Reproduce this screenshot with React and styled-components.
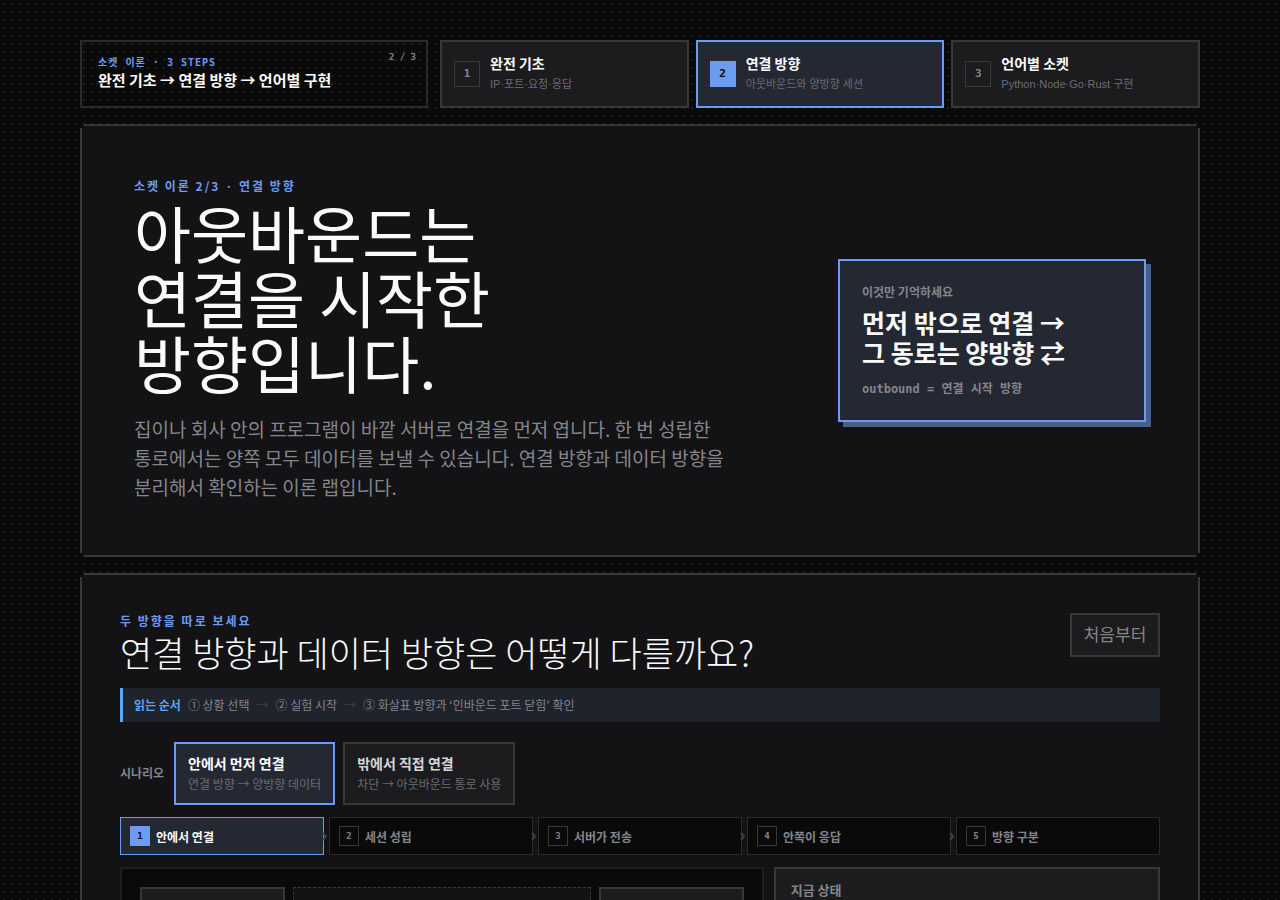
import React from "react";
import styled, { createGlobalStyle, ThemeProvider } from "styled-components";

const theme = {
  bg: "#0a0a0a",
  dot: "#1f1f1f",
  panel: "#131315",
  card: "#1c1c1e",
  active: "#242832",
  line: "#38383a",
  lineSoft: "#2a2a2c",
  accent: "#6d9bf1",
  text: "#fafafa",
  muted: "#85858c",
  dim: "#6b6b72",
  mono: '"DejaVu Sans Mono", "Noto Sans CJK KR", monospace',
};

const GlobalStyle = createGlobalStyle`
  *, *::before, *::after { box-sizing: border-box; }
  body {
    margin: 0;
    color: #fafafa;
    background-color: #0a0a0a;
    font-family: "Noto Sans CJK KR", sans-serif;
  }
  h1, h2, p, ol { margin: 0; padding: 0; }
  button, a { font-family: inherit; color: inherit; }
`;

const Page = styled.div`
  height: 100vh;
  overflow: hidden;
  padding: 40px 80px 0;
  background: ${(p) => p.theme.bg}
    radial-gradient(${(p) => p.theme.dot} 1px, transparent 1px) 0 0 / 8px 8px;
`;

const Container = styled.div`
  display: flex;
  flex-direction: column;
  gap: 16px;
`;

const Header = styled.header`
  display: grid;
  grid-template-columns: 348px 1fr;
  gap: 12px;
`;

const CourseCard = styled.div`
  display: flex;
  justify-content: space-between;
  padding: 10px 10px 10px 16px;
  border: 2px solid ${(p) => p.theme.lineSoft};
`;

const CourseText = styled.div`
  padding-top: 3px;
`;

const CourseLabel = styled.div`
  font: bold 10px/16px ${(p) => p.theme.mono};
  letter-spacing: 1px;
  color: ${(p) => p.theme.accent};
`;

const CourseTitle = styled.div`
  font-size: 15px;
  line-height: 18px;
  font-weight: 700;
  white-space: nowrap;
`;

const Count = styled.div`
  font: bold 9px/10px ${(p) => p.theme.mono};
  color: ${(p) => p.theme.muted};
`;

const Nav = styled.nav`
  display: grid;
  grid-template-columns: repeat(3, 1fr);
  gap: 7px;
`;

const NavCard = styled.a`
  display: flex;
  align-items: center;
  gap: 10px;
  height: 68px;
  padding: 0 12px;
  text-decoration: none;
  border: 2px solid ${(p) => (p.$active ? p.theme.accent : p.theme.line)};
  background: ${(p) => (p.$active ? p.theme.active : p.theme.card)};
`;

const Badge = styled.span`
  display: grid;
  place-items: center;
  flex: none;
  width: ${(p) => (p.$small ? 20 : 26)}px;
  height: ${(p) => (p.$small ? 20 : 26)}px;
  font: bold ${(p) => (p.$small ? 9 : 11)}px/12px ${(p) => p.theme.mono};
  border: 1px solid ${(p) => (p.$active ? p.theme.accent : p.theme.line)};
  background: ${(p) => (p.$active ? p.theme.accent : "transparent")};
  color: ${(p) => (p.$active ? p.theme.bg : p.theme.muted)};
`;

const Stack = styled.span`
  display: flex;
  flex-direction: column;
  gap: 3px;
  padding-bottom: 1px;
  white-space: nowrap;
`;

const ItemTitle = styled.span`
  font-size: 14px;
  line-height: 18px;
  font-weight: 700;
  color: ${(p) => (p.$soft ? "#d4d4d8" : p.theme.text)};
`;

const ItemSub = styled.span`
  font-family: ${(p) => (p.$large ? "" : '"Liberation Sans", ')}"Noto Sans CJK KR", sans-serif;
  font-size: ${(p) => (p.$large ? 12 : 11)}px;
  line-height: 18px;
  color: ${(p) => p.theme.dim};
`;

const Panel = styled.section`
  padding: ${(p) => p.$pad}px;
  border: 2px solid ${(p) => p.theme.line};
  background: ${(p) => p.theme.panel};
  clip-path: polygon(
    0 4px, 2px 4px, 2px 2px, 4px 2px, 4px 0,
    calc(100% - 4px) 0, calc(100% - 4px) 2px, calc(100% - 2px) 2px, calc(100% - 2px) 4px, 100% 4px,
    100% calc(100% - 4px), calc(100% - 2px) calc(100% - 4px), calc(100% - 2px) calc(100% - 2px),
    calc(100% - 4px) calc(100% - 2px), calc(100% - 4px) 100%,
    4px 100%, 4px calc(100% - 2px), 2px calc(100% - 2px), 2px calc(100% - 4px), 0 calc(100% - 4px)
  );
`;

const Hero = styled.div`
  display: grid;
  grid-template-columns: 1fr 308px;
  align-items: center;
  gap: 40px;
`;

const Eyebrow = styled.div`
  font-size: 12px;
  line-height: 16px;
  font-weight: 700;
  letter-spacing: 2px;
  color: ${(p) => p.theme.accent};
`;

const Title = styled.h1`
  margin-top: 6px;
  font-size: 62px;
  line-height: 65px;
  font-weight: 400;
`;

const Line = styled.span`
  display: block;
  white-space: nowrap;
`;

const Lead = styled.p`
  margin: 19px 0 2px;
  font-size: 19px;
  line-height: 29px;
  color: ${(p) => p.theme.muted};
`;

const Memo = styled.aside`
  padding: 22px;
  border: 2px solid ${(p) => p.theme.accent};
  background: ${(p) => p.theme.active};
  box-shadow: 5px 5px 0 #4a5f88;
`;

const MemoLabel = styled.div`
  font-size: 12px;
  line-height: 18px;
  font-weight: 700;
  color: ${(p) => p.theme.muted};
`;

const MemoText = styled.div`
  margin: 6px 0 14px;
  font-size: 25px;
  line-height: 30px;
  font-weight: 700;
`;

const MemoNote = styled.div`
  font: bold 12px/17px ${(p) => p.theme.mono};
  color: ${(p) => p.theme.muted};
`;

const SectionHead = styled.div`
  display: flex;
  justify-content: space-between;
  align-items: flex-start;
`;

const SectionTitle = styled.h2`
  margin: 4px 0 2px;
  font-size: 35px;
  line-height: 38px;
  font-weight: 300;
`;

const ResetButton = styled.button`
  min-width: 90px;
  height: 44px;
  padding: 0 10px 4px;
  font-size: 17px;
  border: 2px solid ${(p) => p.theme.line};
  background: ${(p) => p.theme.card};
  color: ${(p) => p.theme.muted};
`;

const Guide = styled.div`
  display: flex;
  align-items: center;
  gap: 7px;
  height: 34px;
  margin-top: 15px;
  padding: 0 11px 2px;
  border-left: 3px solid #60a5fa;
  background: #1f232c;
  font-size: 12px;
  color: ${(p) => p.theme.muted};
`;

const GuideLabel = styled.b`
  color: #60a5fa;
`;

const GuideArrow = styled.span`
  color: #3f3f46;
`;

const Scenarios = styled.div`
  display: flex;
  align-items: center;
  gap: 8px;
  margin-top: 20px;
`;

const ScenarioLabel = styled.span`
  width: 46px;
  padding-bottom: 2px;
  font-size: 12px;
  font-weight: 700;
  white-space: nowrap;
  color: ${(p) => p.theme.muted};
`;

const Scenario = styled.button`
  height: 63px;
  padding: 0 12px;
  text-align: left;
  border: 2px solid ${(p) => (p.$active ? p.theme.accent : p.theme.line)};
  background: ${(p) => (p.$active ? p.theme.active : p.theme.card)};
`;

const Steps = styled.ol`
  display: grid;
  grid-template-columns: repeat(5, 1fr);
  gap: 5px;
  margin-top: 12px;
  list-style: none;
`;

const Step = styled.li`
  position: relative;
  display: flex;
  align-items: center;
  gap: 6px;
  height: 38px;
  padding: 0 9px;
  font-size: 12px;
  font-weight: 700;
  border: 1px solid ${(p) => (p.$active ? p.theme.accent : p.theme.lineSoft)};
  background: ${(p) => (p.$active ? p.theme.active : p.theme.bg)};
  color: ${(p) => (p.$active ? p.theme.text : p.theme.muted)};
`;

const Chevron = styled.svg`
  position: absolute;
  right: -5px;
  top: 14px;
  width: 6px;
  height: 9px;
  fill: none;
  stroke: #3f3f46;
  stroke-width: 2;
`;

const Lab = styled.div`
  display: grid;
  grid-template-columns: 5fr 3fr;
  gap: 10px;
  margin-top: 12px;
`;

const Stage = styled.div`
  display: grid;
  grid-template-columns: 1fr 2.05fr 1fr;
  gap: 8px;
  min-height: 320px;
  padding: 18px;
  border: 2px solid #1e1e20;
  background: ${(p) => p.theme.bg};
`;

const Host = styled.div`
  border: 2px solid ${(p) => p.theme.line};
  background: ${(p) => p.theme.card};
`;

const Channel = styled.div`
  border: 1px dashed ${(p) => p.theme.line};
  background: ${(p) => p.theme.panel};
`;

const Status = styled.div`
  padding: 12px 15px;
  font-size: 13px;
  line-height: 18px;
  font-weight: 700;
  border: 2px solid ${(p) => p.theme.line};
  background: ${(p) => p.theme.card};
  color: ${(p) => p.theme.muted};
`;

const lessons = [
  ["완전 기초", "IP·포트·요청·응답"],
  ["연결 방향", "아웃바운드와 양방향 세션"],
  ["언어별 소켓", "Python·Node·Go·Rust 구현"],
];

const scenarios = [
  ["안에서 먼저 연결", "연결 방향 → 양방향 데이터"],
  ["밖에서 직접 연결", "차단 → 아웃바운드 통로 사용"],
];

const steps = ["안에서 연결", "세션 성립", "서버가 전송", "안쪽이 응답", "방향 구분"];

export default function App() {
  return (
    <ThemeProvider theme={theme}>
      <GlobalStyle />
      <Page>
        <Container>
          <Header>
            <CourseCard>
              <CourseText>
                <CourseLabel>소켓 이론 · 3 STEPS</CourseLabel>
                <CourseTitle>완전 기초 → 연결 방향 → 언어별 구현</CourseTitle>
              </CourseText>
              <Count>2 / 3</Count>
            </CourseCard>
            <Nav>
              {lessons.map(([title, sub], i) => (
                <NavCard key={title} href="#lesson" $active={i === 1}>
                  <Badge $active={i === 1}>{i + 1}</Badge>
                  <Stack>
                    <ItemTitle>{title}</ItemTitle>
                    <ItemSub>{sub}</ItemSub>
                  </Stack>
                </NavCard>
              ))}
            </Nav>
          </Header>

          <Panel $pad={52}>
            <Hero>
              <div>
                <Eyebrow>소켓 이론 2/3 · 연결 방향</Eyebrow>
                <Title>
                  <Line>아웃바운드는</Line>
                  <Line>연결을 시작한</Line>
                  <Line>방향입니다.</Line>
                </Title>
                <Lead>
                  <Line>집이나 회사 안의 프로그램이 바깥 서버로 연결을 먼저 엽니다. 한 번 성립한</Line>
                  <Line>통로에서는 양쪽 모두 데이터를 보낼 수 있습니다. 연결 방향과 데이터 방향을</Line>
                  <Line>분리해서 확인하는 이론 랩입니다.</Line>
                </Lead>
              </div>
              <Memo>
                <MemoLabel>이것만 기억하세요</MemoLabel>
                <MemoText>
                  <Line>먼저 밖으로 연결 →</Line>
                  <Line>그 동로는 양방향 ⇄</Line>
                </MemoText>
                <MemoNote>outbound = 연결 시작 방향</MemoNote>
              </Memo>
            </Hero>
          </Panel>

          <Panel $pad={38}>
            <SectionHead>
              <div>
                <Eyebrow>두 방향을 따로 보세요</Eyebrow>
                <SectionTitle>연결 방향과 데이터 방향은 어떻게 다를까요?</SectionTitle>
              </div>
              <ResetButton type="button">처음부터</ResetButton>
            </SectionHead>
            <Guide>
              <GuideLabel>읽는 순서</GuideLabel>
              <span>① 상황 선택</span>
              <GuideArrow>→</GuideArrow>
              <span>② 실험 시작</span>
              <GuideArrow>→</GuideArrow>
              <span>③ 화살표 방향과 ‘인바운드 포트 닫힘’ 확인</span>
            </Guide>
            <Scenarios>
              <ScenarioLabel>시나리오</ScenarioLabel>
              {scenarios.map(([title, sub], i) => (
                <Scenario key={title} type="button" $active={i === 0}>
                  <Stack>
                    <ItemTitle $soft={i !== 0}>{title}</ItemTitle>
                    <ItemSub $large>{sub}</ItemSub>
                  </Stack>
                </Scenario>
              ))}
            </Scenarios>
            <Steps>
              {steps.map((label, i) => (
                <Step key={label} $active={i === 0}>
                  <Badge $small $active={i === 0}>{i + 1}</Badge>
                  {label}
                  {i < steps.length - 1 && (
                    <Chevron viewBox="0 0 6 9" aria-hidden="true">
                      <path d="M1 1l3 3.5L1 8" />
                    </Chevron>
                  )}
                </Step>
              ))}
            </Steps>
            <Lab>
              <Stage>
                <Host />
                <Channel />
                <Host />
              </Stage>
              <Status>지금 상태</Status>
            </Lab>
          </Panel>
        </Container>
      </Page>
    </ThemeProvider>
  );
}
